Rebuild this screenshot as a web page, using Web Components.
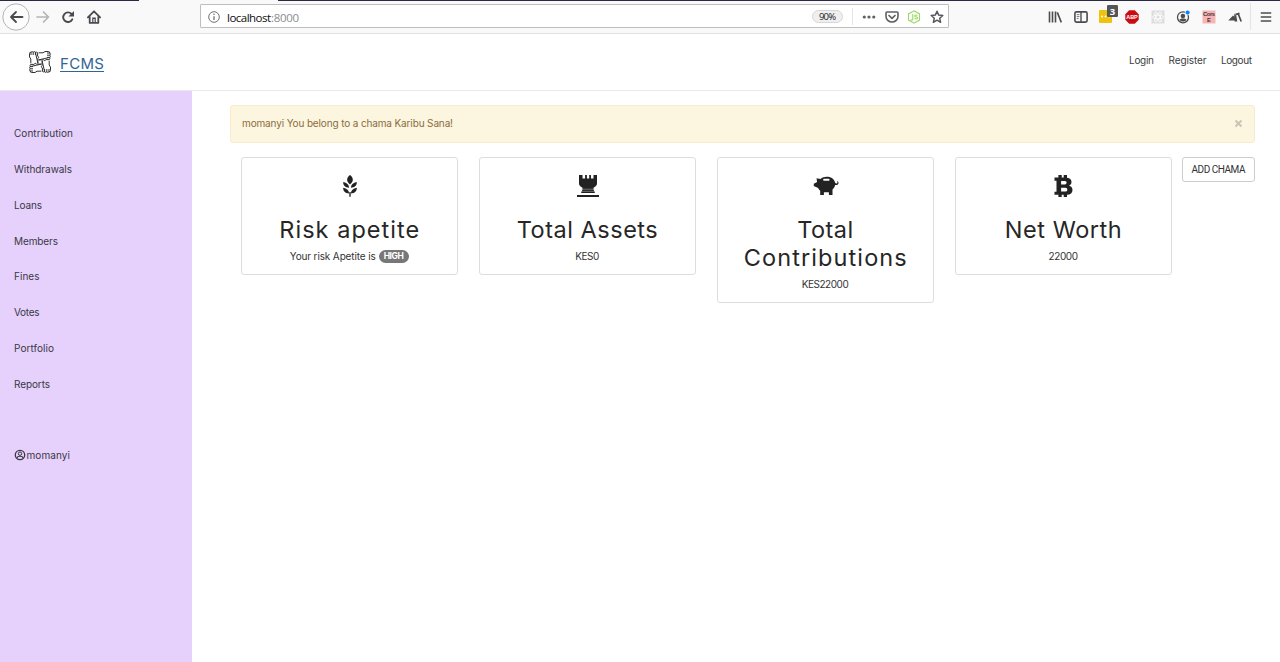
<!DOCTYPE html>
<html lang="en">
<head>
<meta charset="utf-8">
<title>FCMS</title>
<style>
html,body{margin:0;height:100%;background:#fff;overflow:hidden}
body{font-family:Inter,Roboto,"Liberation Sans",sans-serif;font-size:10px;line-height:12px;color:#3c3c40}
</style>
</head>
<body>
<fcms-app></fcms-app>
<script>
const define = (name, markup, setup) => customElements.define(name, class extends HTMLElement {
  connectedCallback() {
    if (this.shadowRoot) return;
    const t = document.createElement('template');
    t.innerHTML = typeof markup === 'function' ? markup(this) : markup;
    this.attachShadow({mode:'open'}).append(t.content.cloneNode(true));
    if (setup) setup(this);
  }
});

/* Single line of text, tracked so that it fills the width given in "w". */
define('tracked-text', '<style>:host{display:inline-block;white-space:nowrap}span{display:inline-block;white-space:pre}</style><span><slot></slot></span>', el => {
  const s = el.shadowRoot.querySelector('span');
  s.style.letterSpacing = '0px';
  const n = el.textContent.length, w = +el.getAttribute('w');
  const gap = (w - s.getBoundingClientRect().width) / (n - 1);
  s.style.letterSpacing = gap + 'px';
  s.style.marginRight = -gap + 'px';
});

const icons = {
  back: ['0 0 28 28', '<circle cx="14" cy="14" r="13.2" fill="#fcfcfc" stroke="#b5b5b7"/><path d="M20.500 14H9.500M14 9l-5 5 5 5" fill="none" stroke="#4a4a4f" stroke-width="1.8" stroke-linecap="round" stroke-linejoin="round"/>'],
  forward: ['0 0 14 14', '<path d="M1 7h11.5M7.5 2l5 5-5 5" fill="none" stroke="#b5b5b6" stroke-width="1.7" stroke-linecap="round" stroke-linejoin="round"/>'],
  reload: ['0 0 14 14', '<path d="M11.3 9.3A4.8 4.8 0 1 1 10.6 4" fill="none" stroke="#4a4a4f" stroke-width="1.9" stroke-linecap="round"/><path d="M13 1v5.6H7.4z" fill="#4a4a4f"/>'],
  home: ['0 0 14 14', '<path d="M.9 7.4L7 1.3l6.1 6.1M2.7 7v5.9h8.6V7" fill="none" stroke="#4a4a4f" stroke-width="1.8" stroke-linecap="round" stroke-linejoin="round"/><path d="M5.2 13V7.6h3.6V13H7.6V9H6.4v4z" fill="#4a4a4f"/>'],
  info: ['0 0 12 12', '<circle cx="6" cy="6" r="5.3" fill="none" stroke="#707074"/><path d="M6 5.2v3.7M6 2.8v1.3" stroke="#707074" stroke-width="1.3"/>'],
  dots: ['0 0 14 4', '<g fill="#606064"><circle cx="2.3" cy="2" r="1.6"/><circle cx="7" cy="2" r="1.6"/><circle cx="11.8" cy="2" r="1.6"/></g>'],
  pocket: ['0 0 14 12', '<path d="M1.9 1h10.2c.6 0 .9.4.9.9v3.3a6 5.8 0 0 1-12 0V1.9C1 1.4 1.3 1 1.9 1z" fill="none" stroke="#606064" stroke-width="1.6"/><path d="M4 4.5l3 2.8 3-2.8" fill="none" stroke="#606064" stroke-width="1.7" stroke-linecap="round" stroke-linejoin="round"/>'],
  node: ['0 0 14 14', '<path d="M7 .8l5.5 3.1v6.2L7 13.2l-5.500-3.100V3.900z" fill="none" stroke="#9bd863" stroke-width="1.1"/><path d="M5.8 3.900v5c0 1.500-1.700 1.500-2 .6M10.300 5.600c-.7-1-2.600-.8-2.600.3 0 1.500 2.900.7 2.900 2.100 0 1.200-2.500 1.300-3.100.2" fill="none" stroke="#9bd863" stroke-width="1.1"/>'],
  star: ['0 0 14 14', '<path d="M7 1.300l1.700 3.800 4.100.4-3.100 2.700.9 4.100L7 10.200l-3.600 2.100.9-4.100-3.100-2.700 4.100-.4z" fill="none" stroke="#58585c" stroke-width="1.500" stroke-linejoin="round"/>'],
  library: ['0 0 14 14', '<path d="M1.500 1.500v11M4.500 1.500v11M7.500 1.500v11M9.300 2.400l4 10" fill="none" stroke="#4c4c50" stroke-width="1.600"/>'],
  sidebar: ['0 0 14 12', '<rect x=".9" y=".9" width="12.200" height="10.200" rx="1.500" fill="none" stroke="#4c4c50" stroke-width="1.600"/><path d="M7 1v10" stroke="#4c4c50" stroke-width="1.400"/><path d="M2.800 3.600h2.600M2.800 5.600h2.600M2.800 7.600h1.700" stroke="#77777a"/>'],
  notes: ['0 0 22 20', '<rect x="4" y="7" width="13" height="13" rx="1" fill="#efc30d"/><g fill="#fff"><circle cx="7" cy="13.500" r="1"/><circle cx="10.500" cy="13.500" r="1"/><circle cx="14" cy="13.500" r="1"/></g><rect x="12" y="2" width="11" height="12" rx="1.200" fill="#555558"/><text x="17.400" y="11.500" font-size="9.500" font-weight="700" text-anchor="middle" fill="#fff" font-family="Open Sans">3</text>'],
  abp: ['0 0 14 14', '<path d="M4.200.3h5.600l3.900 3.900v5.600l-3.900 3.900H4.200L.3 9.800V4.200z" fill="#c70d12"/><text x="7" y="9.200" font-size="6" font-weight="700" text-anchor="middle" textLength="11.500" lengthAdjust="spacingAndGlyphs" fill="#fff" font-family="Liberation Sans">ABP</text>'],
  react: ['0 0 14 14', '<rect x=".5" y=".5" width="13" height="13" fill="#dedede"/><g fill="none" stroke="#fff" stroke-width=".8"><ellipse cx="7" cy="7" rx="5.500" ry="2"/><ellipse cx="7" cy="7" rx="5.500" ry="2" transform="rotate(60 7 7)"/><ellipse cx="7" cy="7" rx="5.500" ry="2" transform="rotate(120 7 7)"/></g>'],
  account: ['0 0 14 14', '<circle cx="7" cy="7.300" r="5.500" fill="none" stroke="#4c4c50" stroke-width="1.300"/><circle cx="6.900" cy="6" r="2.300" fill="#4c4c50"/><path d="M3.300 9.800c1.700-1.700 5.600-1.700 7.300 0-1.200 2.200-6 2.500-7.300 0z" fill="#4c4c50"/><circle cx="11.600" cy="2.600" r="2.700" fill="#f9f9fa"/><circle cx="11.600" cy="2.600" r="2.100" fill="#0a84ff"/>'],
  cors: ['0 0 14 14', '<rect x=".5" y=".5" width="13" height="13" fill="#f6b5b5"/><g font-size="5.800" font-weight="700" text-anchor="middle" fill="#4b3035" font-family="Liberation Sans"><text x="7" y="6" textLength="12">Cors</text><text x="7" y="12.300">E</text></g>'],
  peak: ['0 0 14 14', '<path d="M.3 10.500L5 5.500l1.300 1.300V3.500l2 2.200 1 5.800H6.500v-1z" fill="#4c4c50"/><path d="M7.500 4.600l4-1.300M10.300 4l2.900 7.500" fill="none" stroke="#4c4c50" stroke-width="1.700"/>'],
  menu: ['0 0 12 12', '<path d="M1.300 1.900h9.400M1.300 6h9.400M1.300 10.100h9.400" stroke="#4c4c50" stroke-width="1.500" stroke-linecap="round"/>'],
  user: ['0 0 12 12', '<circle cx="6" cy="6" r="4.700" fill="none" stroke="#3b3744" stroke-width="1.300"/><circle cx="6" cy="4.700" r="1.700" fill="none" stroke="#3b3744"/><path d="M2.900 9.100c.5-2.500 5.700-2.500 6.200 0" fill="none" stroke="#3b3744" stroke-width="1.100"/>'],
  hands: ['0 0 24 24', '<g fill="none" stroke="#333" stroke-width="1" stroke-linejoin="round"><path id="h" d="M2.800 13.300V9L1.500 7V3.500q0-1.300 1.500-1.300M3 5V2.200q1.300-1.200 2.200 0V5M5.200 2.200q1.100-1.200 2.200 0V5M7.400 2.300q1.700-.9 2.200.6v3.300l1.300 1-1 1.300v4.800z"/><use href="#h" transform="rotate(90 12 12)"/><use href="#h" transform="rotate(180 12 12)"/><use href="#h" transform="rotate(270 12 12)"/></g>'],
  grain: ['0 0 14 22', '<g fill="#222"><path d="M7 .1c3.800 2.900 3.800 6.600 0 9.300-3.800-2.700-3.800-6.400 0-9.300z"/><path id="g" d="M13.800 6.900c.2 3.500-2 5.500-5.900 5.800.1-3.200 2.200-5.300 5.900-5.800zM13.800 12.800c.2 3.500-2 5.500-5.900 5.800.1-3.200 2.200-5.300 5.900-5.800z"/><use href="#g" transform="matrix(-1 0 0 1 14 0)"/><path d="M6.300 17h1.400v4.800H6.300z"/></g>'],
  tower: ['0 0 22 22', '<path d="M2 0h3.500v3.500h2.600V0h1.800v3.500h2.300V0h1.800v3.500h2.500V0H20v8.500c0 2-1.700 3.400-3.700 4.200H5.700C3.700 11.900 2 10.500 2 8.500z" fill="#222"/><path d="M5.500 12h11v2.500l1.500 3.500H4l1.500-3.500z" fill="#222"/><path d="M4.500 14.200h13M4 16.300h14" stroke="#aaa" stroke-width=".6"/><path d="M0 20h22v2H0z" fill="#222"/>'],
  pig: ['0 0 26 19', '<path d="M3.500 2.200l4 .9C9.500 1 12.500.4 15 .8c4 .4 6.600 3 7.100 6 .5.900 2.500 1 2.300-.4-.1-.6-.6-.8-.5-1.200 1.900-.2 2.400 2.900.2 3.700-.8.300-1.500.2-2 0-.4 2-1.200 3.300-2.600 4.500V19h-3.600v-2.700h-5V19H7.200v-4.300c-1-.6-1.600-1.600-2.100-2.700L.8 10V7.700l3.300-1.800z" fill="#222"/><rect x="10.200" y="2.700" width="6.300" height="2" rx=".8" fill="#fff"/>'],
  bitcoin: ['0 0 19 22', '<path d="M.5 2.600h3.900V0h3.300v2.600h2V0H13v2.800c3.300.5 4.500 2.200 4.500 4.300 0 1.900-.9 3-2.500 3.600 2.300.6 3.500 2 3.500 4.200 0 3-2.100 4.500-5.500 4.900V22H9.700v-2.200h-2V22H4.400v-2.200H.5v-3.100h2V5.700h-2zM7.100 6v3.400h3.800c2.300 0 2.300-3.400 0-3.400zM7.100 12.700v3.900h4.300c2.600 0 2.600-3.900 0-3.900z" fill="#222" fill-rule="evenodd"/>']
};
define('app-icon', el => {
  const [box, body] = icons[el.getAttribute('name')];
  const [, , w, h] = box.split(' ');
  return `<style>:host{display:inline-flex;width:${w}px;height:${h}px;flex:none}svg{display:block;overflow:visible}</style><svg width="${w}" height="${h}" viewBox="${box}">${body}</svg>`;
});

define('browser-bar', `<style>
:host{display:flex;align-items:center;height:34px;box-sizing:border-box;background:#f9f9fa;border-bottom:1px solid #e1e1e2;
 background-image:linear-gradient(90deg,#2d2943 139px,#f9f9fa 139px 278px,#2d2943 278px);background-size:100% 1px;background-repeat:no-repeat}
.nav{display:flex;align-items:center;width:200px;box-sizing:border-box;padding-left:2px}
.nav :nth-child(2){margin-left:6px}.nav :nth-child(3){margin-left:11px}.nav :nth-child(4){margin-left:12px}
.url{display:flex;align-items:center;width:749px;height:24px;box-sizing:border-box;border:1px solid #bebebf;background:#fff;padding:0 4px 0 7px;font:11.500px "Open Sans",sans-serif;color:#0c0c0d;margin-top:-1px;border-radius:1px}
.url>app-icon{margin-top:1px}
.addr{display:flex;margin-left:7px;margin-top:2px}.addr span{color:#8b8b8d}
.zoom{margin-left:auto;width:31px;height:13px;box-sizing:border-box;border:1px solid #d6d6d7;border-radius:7px;background:#efeff0;display:flex;align-items:center;justify-content:center;font-size:9.5px;color:#222;margin-right:9px;margin-top:1px}
i{width:1px;height:17px;background:#e4e4e5}
.url .dots{margin-left:9px}.url .pocket{margin:1px 8px 0 9px}.url .star{margin-left:9px}
.tools{display:grid;grid-template-columns:repeat(8,25.650px);margin-left:93.400px;justify-items:center;align-items:center}
.tools+i{height:27px;margin-left:2px}.menu{margin-left:9px}
.notes{margin-top:-7px}
</style>
<div class="nav"><app-icon name="back"></app-icon><app-icon name="forward"></app-icon><app-icon name="reload"></app-icon><app-icon name="home"></app-icon></div>
<div class="url"><app-icon name="info"></app-icon><div class="addr"><tracked-text w="44">localhost</tracked-text><span><tracked-text w="28">:8000</tracked-text></span></div>
<div class="zoom"><tracked-text w="17">90%</tracked-text></div><i></i><app-icon class="dots" name="dots"></app-icon><app-icon class="pocket" name="pocket"></app-icon><app-icon name="node"></app-icon><app-icon class="star" name="star"></app-icon></div>
<div class="tools"><app-icon name="library"></app-icon><app-icon name="sidebar"></app-icon><app-icon class="notes" name="notes"></app-icon><app-icon name="abp"></app-icon><app-icon name="react"></app-icon><app-icon name="account"></app-icon><app-icon name="cors"></app-icon><app-icon name="peak"></app-icon></div><i></i><app-icon class="menu" name="menu"></app-icon>`);

define('site-header', `<style>
:host{display:flex;align-items:center;height:57px;box-sizing:border-box;border-bottom:1px solid #e9e9e9;padding:0 28px 0 28px}
a{display:inline-flex;margin-left:8px;font-size:15px;line-height:20px;color:#2f6594;border-bottom:1px solid #2f6594;height:17px;margin-top:1px}
nav{display:flex;gap:14.500px;margin-left:auto;margin-top:-5px}
</style><app-icon name="hands"></app-icon><a><tracked-text w="44">FCMS</tracked-text></a>
<nav><tracked-text w="25">Login</tracked-text><tracked-text w="38">Register</tracked-text><tracked-text w="31">Logout</tracked-text></nav>`);

define('side-nav', `<style>
:host{display:block;width:192px;flex:none;box-sizing:border-box;background:#e5d1fc;padding:24.200px 14px 0;color:#3b3744}
div{height:35.850px;display:flex;align-items:center}
.me{margin-top:35px;gap:1px}
.me app-icon{margin-left:-.5px}
</style>${[['Contribution',59],['Withdrawals',58],['Loans',28],['Members',44],['Fines',25.5],['Votes',25.5],['Portfolio',40],['Reports',36]].map(([t,w])=>`<div><tracked-text w="${w}">${t}</tracked-text></div>`).join('')}
<div class="me"><app-icon name="user"></app-icon><tracked-text w="43.500">momanyi</tracked-text></div>`);

define('alert-bar', `<style>
:host{display:flex;align-items:center;justify-content:space-between;height:37.500px;box-sizing:border-box;border:1px solid #faebcc;border-radius:3px;background:#fcf6e1;color:#8a6d3b;padding:0 11px 1px}
svg{display:block}</style><slot></slot><svg width="9" height="9" viewBox="0 0 9 9"><path d="M1.500 1.500l6 6M7.500 1.500l-6 6" stroke="#c9c4b4" stroke-width="2"/></svg>`);

define('stat-card', el => `<style>
:host{display:flex;flex-direction:column;align-items:center;box-sizing:border-box;border:1px solid #ddd;border-radius:3px;padding:14.500px 0 10px;color:#333;background:#fff}
.ic{height:26px;display:flex;align-items:center;padding-left:1px}
.title{display:flex;flex-direction:column;align-items:center;font-size:23.500px;line-height:28px;margin-top:17px;color:#262626}
.note{display:flex;align-items:center;gap:3px;height:16px;margin-top:4.500px}
</style><div class="ic"><app-icon name="${el.getAttribute('icon')}"></app-icon></div><div class="title"><slot name="title"></slot></div><div class="note"><slot></slot></div>`);

define('pill-badge', `<style>:host{display:inline-flex;align-items:center;justify-content:center;width:30px;height:13px;border-radius:7px;background:#777;color:#fff;font-size:8.500px;font-weight:700}</style><slot></slot>`);

define('outline-button', `<style>:host{display:flex;align-items:center;justify-content:center;height:25px;box-sizing:border-box;border:1px solid #ccc;border-radius:3px;background:#fff;color:#333;font-family:Roboto,sans-serif}</style><slot></slot>`);

define('fcms-app', `<style>
:host{display:flex;flex-direction:column;height:662px}
.body{display:flex;flex:1}
main{flex:1;min-width:0;box-sizing:border-box;padding:14px 25px 0 38px}
.cards{display:grid;grid-template-columns:repeat(4,216.500px) 62px;column-gap:21.500px;align-items:start;margin:14.500px 0 0 11px}
outline-button{margin-left:-11px}
</style>
<browser-bar></browser-bar><site-header></site-header>
<div class="body"><side-nav></side-nav><main>
<alert-bar><tracked-text w="211">momanyi You belong to a chama Karibu Sana!</tracked-text></alert-bar>
<div class="cards">
<stat-card icon="grain"><tracked-text slot="title" w="140">Risk apetite</tracked-text><tracked-text w="86">Your risk Apetite is</tracked-text><pill-badge><tracked-text w="20">HIGH</tracked-text></pill-badge></stat-card>
<stat-card icon="tower"><tracked-text slot="title" w="141">Total Assets</tracked-text><tracked-text w="24">KES0</tracked-text></stat-card>
<stat-card icon="pig"><tracked-text slot="title" w="56">Total</tracked-text><tracked-text slot="title" w="163">Contributions</tracked-text><tracked-text w="47">KES22000</tracked-text></stat-card>
<stat-card icon="bitcoin"><tracked-text slot="title" w="117">Net Worth</tracked-text><tracked-text w="29.500">22000</tracked-text></stat-card>
<outline-button><tracked-text w="54">ADD CHAMA</tracked-text></outline-button>
</div></main></div>`);
</script>
</body>
</html>
